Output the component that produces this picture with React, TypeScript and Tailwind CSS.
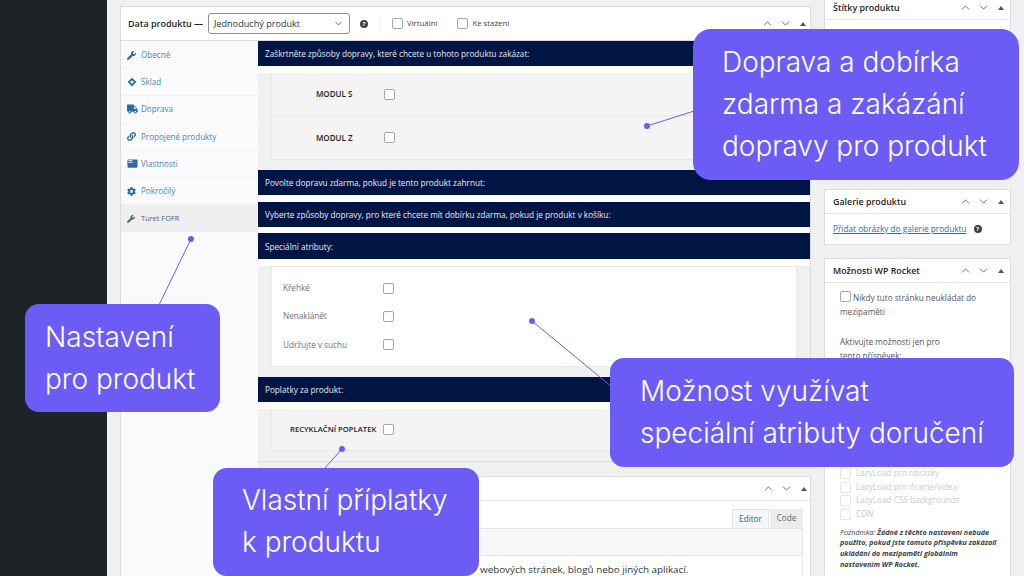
import type { ReactNode } from 'react';
import { ChevronDown, ChevronUp } from 'lucide-react';
import { FaCog, FaLink, FaTruck, FaWrench } from 'react-icons/fa';
import { MdFeaturedPlayList } from 'react-icons/md';

function CubeIcon({ className }: { className?: string }) {
  return (
    <svg viewBox="0 0 16 16" className={className} fill="currentColor">
      <path d="M8 1l7 7-7 7-7-7 7-7zm0 4.5A2.5 2.5 0 1 0 8 10.5 2.5 2.5 0 0 0 8 5.5z" />
    </svg>
  );
}

const tabs = [
  { icon: FaWrench, label: 'Obecné', size: 'h-[9px] w-[9px]' },
  { icon: CubeIcon, label: 'Sklad', size: 'h-[10px] w-[10px]' },
  { icon: FaTruck, label: 'Doprava', size: 'h-[10px] w-[11px]' },
  { icon: FaLink, label: 'Propojené produkty', size: 'h-[9px] w-[9px]' },
  { icon: MdFeaturedPlayList, label: 'Vlastnosti', size: 'h-[11px] w-[11px]' },
  { icon: FaCog, label: 'Pokročilý', size: 'h-[9px] w-[9px]' },
];

function Checkbox({ faded = false }: { faded?: boolean }) {
  return (
    <span
      className={`block h-[11px] w-[11px] shrink-0 rounded-[2px] border bg-white ${
        faded ? 'border-[#e6e6e6]' : 'border-[#a4a6aa]'
      }`}
    />
  );
}

function HandleIcons() {
  return (
    <div className="flex items-center gap-[5px] text-[#50575e]">
      <ChevronUp className="h-[13px] w-[13px]" strokeWidth={1.6} />
      <ChevronDown className="h-[13px] w-[13px]" strokeWidth={1.6} />
      <span className="ml-[3px] h-0 w-0 border-x-[3px] border-b-[4px] border-x-transparent border-b-[#50575e]" />
    </div>
  );
}

function HelpDot() {
  return (
    <span className="flex h-[8px] w-[8px] items-center justify-center rounded-full bg-[#3c434a] text-[6px] font-bold leading-none text-white">
      ?
    </span>
  );
}

function NavyBar({ children, className = 'h-[25px]' }: { children: ReactNode; className?: string }) {
  return (
    <div className={`flex items-center bg-[#001543] pl-[7px] pt-[2px] text-[8.2px] text-[#e8ebf2] ${className}`}>
      {children}
    </div>
  );
}

function SideCard({ title, children }: { title: string; children?: ReactNode }) {
  return (
    <div className="border border-[#dcdcde] bg-white">
      <div className="flex h-[24px] items-center justify-between border-b border-[#e4e4e6] pl-[8px] pr-[6px]">
        <span className="text-[8.9px] font-semibold text-[#1d2327]">{title}</span>
        <HandleIcons />
      </div>
      {children}
    </div>
  );
}

function Callout({ className, children }: { className: string; children: ReactNode }) {
  return (
    <div
      className={`absolute bg-[#6c5cf5] text-[28px] font-light leading-[42px] text-white [font-family:Inter,sans-serif] ${className}`}
    >
      {children}
    </div>
  );
}

export default function App() {
  return (
    <div className="relative flex h-[576px] w-[1024px] overflow-hidden bg-[#f0f0f1] [font-family:'Open_Sans',sans-serif]">
      <aside className="w-[107px] shrink-0 bg-[#1d2327]" />

      <main className="flex flex-1 items-start gap-[13px] pl-[13px]">
        <div className="flex h-[576px] w-[691px] shrink-0 flex-col pt-[6px]">
          {/* Data produktu */}
          <div className="flex h-[35px] shrink-0 items-center border border-[#dcdcde] bg-white pl-[7px] pr-[3px]">
            <span className="w-[80px] whitespace-nowrap text-[9px] font-semibold text-[#1d2327]">Data produktu —</span>
            <div className="flex h-[21px] w-[142px] items-center justify-between rounded-[3px] border border-[#8c8f94] pl-[5px] pr-[5px] text-[9.1px] text-[#2c3338]">
              Jednoduchý produkt
              <ChevronDown className="h-[11px] w-[11px]" strokeWidth={1.6} />
            </div>
            <span className="ml-[10px]">
              <HelpDot />
            </span>
            <span className="ml-[11px] h-[14px] w-px bg-[#eeeeee]" />
            <span className="ml-[12px]">
              <Checkbox />
            </span>
            <span className="ml-[4px] text-[7.8px] text-[#3c434a]">Virtuální</span>
            <span className="ml-[20px]">
              <Checkbox />
            </span>
            <span className="ml-[4px] text-[7.8px] text-[#3c434a]">Ke stažení</span>
            <div className="ml-auto pr-[1px]">
              <HandleIcons />
            </div>
          </div>

          <div className="flex flex-1">
            <nav className="w-[138px] shrink-0 border-l border-[#dcdcde] bg-[#fafafa] pt-[1px]">
              {tabs.map((tab) => {
                const Icon = tab.icon;
                return (
                  <div
                    key={tab.label}
                    className="flex h-[27.2px] items-center border-b border-[#f3f3f3] pl-[6px] text-[8.1px] text-[#4a86b8]"
                  >
                    <span className="flex w-[14px] shrink-0">
                      <Icon className={`${tab.size} text-[#2a6ca6]`} />
                    </span>
                    {tab.label}
                  </div>
                );
              })}
              <div className="flex h-[27px] items-center bg-[#eeeeee] pl-[6px] text-[7.4px] text-[#555d66]">
                <span className="flex w-[14px] shrink-0">
                  <FaWrench className="h-[8px] w-[8px] text-[#555d66]" />
                </span>
                Turet FOFR
              </div>
            </nav>

            <div className="flex w-[553px] flex-col gap-[14px]">
              <section className="border-b border-r border-[#dcdcde] bg-white">
                <NavyBar>Zaškrtněte způsoby dopravy, které chcete u tohoto produktu zakázat:</NavyBar>
                <div className="mt-[7px] bg-[#f0f0f0] pb-[10px] pl-[13px] pr-[13px]">
                  <div className="border-x border-b border-[#e6e6e6] bg-[#f4f4f4]">
                    <div className="flex h-[43px] items-center border-b border-[#e8e8e8]">
                      <span className="w-[112px] pl-[44px] text-[8px] font-semibold text-[#1d2327]">MODUL S</span>
                      <Checkbox />
                    </div>
                    <div className="flex h-[43px] items-center">
                      <span className="w-[112px] pl-[44px] text-[8px] font-semibold text-[#1d2327]">MODUL Z</span>
                      <Checkbox />
                    </div>
                  </div>
                </div>
                <NavyBar>Povolte dopravu zdarma, pokud je tento produkt zahrnut:</NavyBar>
                <div className="h-[7px]" />
                <NavyBar>Vyberte způsoby dopravy, pro které chcete mít dobírku zdarma, pokud je produkt v košíku:</NavyBar>
                <div className="h-[6px]" />
                <NavyBar className="h-[26px]">Speciální atributy:</NavyBar>
                <div className="mt-[7px] bg-[#f0f0f0] pb-[10px] pl-[13px] pr-[13px]">
                  <div className="flex h-[101px] flex-col justify-center gap-[16px] border border-[#e9e9e9] bg-white pl-[11px] text-[8.2px] text-[#6d7278]">
                    <div className="flex items-center">
                      <span className="w-[100px]">Křehké</span>
                      <Checkbox />
                    </div>
                    <div className="flex items-center">
                      <span className="w-[100px]">Nenaklánět</span>
                      <Checkbox />
                    </div>
                    <div className="flex items-center">
                      <span className="w-[100px]">Udržujte v suchu</span>
                      <Checkbox />
                    </div>
                  </div>
                </div>
                <NavyBar>Poplatky za produkt:</NavyBar>
                <div className="mt-[7px] bg-[#f0f0f0] pb-[10px] pl-[13px] pr-[13px]">
                  <div className="flex h-[42px] items-center border-x border-b border-[#e6e6e6] bg-[#f4f4f4] pl-[18px]">
                    <span className="w-[93px] whitespace-nowrap text-[7.7px] font-semibold text-[#1d2327]">
                      RECYKLAČNÍ POPLATEK
                    </span>
                    <Checkbox />
                  </div>
                </div>
              </section>

              {/* Editor */}
              <section className="flex-1 border border-[#dcdcde] bg-white">
                <div className="flex h-[24px] items-center justify-end border-b border-[#e4e4e6] pr-[3px]">
                  <HandleIcons />
                </div>
                <div className="pl-[7px] pr-[7px] pt-[8px]">
                  <div className="flex justify-end gap-[1px]">
                    <span className="flex h-[19px] w-[37px] items-center justify-center border-x border-t border-[#e4e4e6] bg-[#f6f7f7] text-[8.2px] text-[#50575e]">
                      Editor
                    </span>
                    <span className="flex h-[19px] w-[33px] items-center justify-center bg-[#ececec] text-[8.2px] text-[#646970]">
                      Code
                    </span>
                  </div>
                  <div className="h-[28px] border border-[#e4e4e6] bg-[#f6f7f7]" />
                  <div className="h-[60px] border-x border-[#e4e4e6] pl-[213px] pt-[6px] text-[9.85px] text-[#32373c]">
                    webových stránek, blogů nebo jiných aplikací.
                  </div>
                </div>
              </section>
            </div>
          </div>
        </div>

        {/* Pravý sloupec */}
        <div className="flex w-[187px] shrink-0 flex-col gap-[13px]">
          <div className="h-[176px]">
            <div className="-mt-[5px]">
              <SideCard title="Štítky produktu">
                <div className="h-[150px]" />
              </SideCard>
            </div>
          </div>
          <SideCard title="Galerie produktu">
            <div className="flex h-[30px] items-center gap-[7px] pl-[8px] text-[8.25px] text-[#2271b1]">
              <span className="underline">Přidat obrázky do galerie produktu</span>
              <HelpDot />
            </div>
          </SideCard>
          <SideCard title="Možnosti WP Rocket">
            <div className="h-[320px] pl-[15px] pr-[6px] pt-[8px] text-[8.2px] text-[#50575e]">
              <div className="leading-[14px]">
                <span className="mr-[2px] inline-block align-[-1px]">
                  <Checkbox />
                </span>
                Nikdy tuto stránku neukládat do
                <br />
                mezipaměti
              </div>
              <div className="mt-[16px] leading-[13.5px]">
                Aktivujte možnosti jen pro
                <br />
                tento příspěvek:
              </div>
              <div className="mt-[106px] flex flex-col gap-[2.5px] text-[#c9cacc]">
                {['LazyLoad pro obrázky', 'LazyLoad pro iframe/videa', 'LazyLoad CSS backgrounds', 'CDN'].map((label) => (
                  <div key={label} className="flex h-[11px] items-center gap-[5px]">
                    <Checkbox faded />
                    {label}
                  </div>
                ))}
              </div>
              <p className="mt-[7px] whitespace-nowrap text-[7.2px] italic leading-[10.7px] text-[#3c434a]">
                Poznámka: <strong className="font-bold">Žádné z těchto nastavení nebude</strong>
                <br />
                <strong className="font-bold">použito, pokud jste tomuto příspěvku zakázali</strong>
                <br />
                <strong className="font-bold">ukládání do mezipaměti globálním</strong>
                <br />
                <strong className="font-bold">nastavením WP Rocket.</strong>
              </p>
            </div>
          </SideCard>
        </div>
      </main>

      {/* Vodicí čáry */}
      <svg className="absolute inset-0" width="1024" height="576" viewBox="0 0 1024 576" fill="none">
        <g stroke="#6c5cf5" strokeWidth="1">
          <line x1="647" y1="126" x2="694" y2="111" />
          <line x1="191" y1="239" x2="159" y2="305" />
          <line x1="532" y1="321" x2="612" y2="387" />
          <line x1="342" y1="449" x2="324" y2="469" />
        </g>
        <g fill="#6c5cf5">
          <circle cx="647" cy="126" r="3" />
          <circle cx="191" cy="239" r="3" />
          <circle cx="532" cy="321" r="3" />
          <circle cx="342" cy="449" r="3" />
        </g>
      </svg>

      <Callout className="left-[693px] top-[29px] h-[151px] w-[326px] rounded-[18px] pl-[29px] pt-[12px]">
        Doprava a dobírka
        <br />
        zdarma a zakázání
        <br />
        dopravy pro produkt
      </Callout>
      <Callout className="left-[25px] top-[304px] h-[108px] w-[195px] rounded-[14px] pl-[20px] pt-[12px]">
        Nastavení
        <br />
        pro produkt
      </Callout>
      <Callout className="left-[610px] top-[358px] h-[109px] w-[404px] rounded-[14px] pl-[30px] pt-[12px]">
        Možnost využívat
        <br />
        speciální atributy doručení
      </Callout>
      <Callout className="left-[213px] top-[468px] h-[108px] w-[266px] rounded-[14px] pl-[29px] pt-[11px]">
        Vlastní příplatky
        <br />k produktu
      </Callout>
    </div>
  );
}
